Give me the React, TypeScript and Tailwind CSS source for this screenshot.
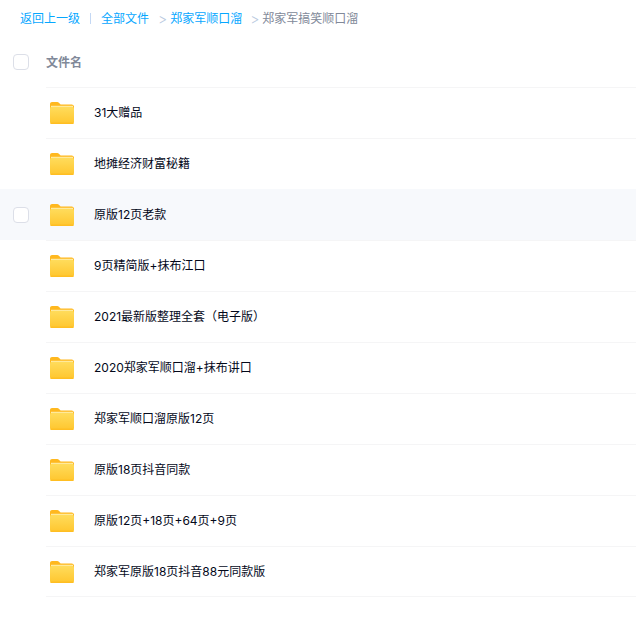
// 文件列表 页面
const files = [
  "31大赠品",
  "地摊经济财富秘籍",
  "原版12页老款",
  "9页精简版+抹布江口",
  "2021最新版整理全套（电子版）",
  "2020郑家军顺口溜+抹布讲口",
  "郑家军顺口溜原版12页",
  "原版18页抖音同款",
  "原版12页+18页+64页+9页",
  "郑家军原版18页抖音88元同款版",
];

const font = "font-['Inter','Noto_Sans_CJK_SC',sans-serif]";

const FolderIcon = () => (
  <svg width="24" height="22" viewBox="0 0 24 22" className="shrink-0">
    <defs>
      <linearGradient id="folderFront" x1="0" y1="0" x2="0" y2="1">
        <stop offset="0" stopColor="#ffdc5c" />
        <stop offset="1" stopColor="#ffc62e" />
      </linearGradient>
    </defs>
    <path d="M0 2C0 .9 .9 0 2 0h5.2c.7 0 1.2.2 1.7.7L10.6 2.4h11.2C23 2.4 24 3.4 24 4.6V8H0z" fill="#ffb81f" />
    <rect x="1" y="3.8" width="22" height="1.6" fill="#ffeeb0" />
    <rect x="0" y="4.8" width="24" height="17.2" rx="2" fill="url(#folderFront)" />
    <rect x="0.4" y="20.6" width="23.2" height="1.4" rx="0.7" fill="#ffbe22" />
  </svg>
);

const Checkbox = ({ className = "" }: { className?: string }) => (
  <span className={`block w-4 h-4 rounded-[4px] border border-[#dcdfe8] bg-white ${className}`} />
);

const App = () => {
  return (
    <div className={`w-[636px] h-[626px] overflow-hidden bg-white ${font}`}>
      {/* 경로 */}
      <div className="flex items-center h-[37px] pl-5 text-[12px] text-[#06a7ff]">
        <span>返回上一级</span>
        <span className="mx-[10px] w-px h-[11px] bg-[#c4d8f4]" />
        <span>全部文件</span>
        <span className="ml-[9px] mr-[3px] text-[14px] font-light leading-none text-[#b8c9e0]">&gt;</span>
        <span>郑家军顺口溜</span>
        <span className="ml-2 mr-[3px] text-[14px] font-light leading-none text-[#b8c9e0]">&gt;</span>
        <span className="text-[#818999]">郑家军搞笑顺口溜</span>
      </div>

      {/* 表头 */}
      <div className="flex items-center h-[50px]">
        <Checkbox className="ml-[13px]" />
        <div className="ml-[17px] pt-px text-[12px] font-bold text-[#818999]">文件名</div>
      </div>

      {/* 파일 목록 */}
      <div>
        {files.map((name, idx) => (
          <div key={idx} className={`flex items-center h-[51px] ${idx === 2 ? "bg-[#f7f9fc]" : ""}`}>
            <div className="w-[46px] shrink-0 pl-[13px]">
              {idx === 2 && <Checkbox />}
            </div>
            <div
              className={`flex-1 flex items-center h-full pl-1 border-t ${idx === 2 ? "border-transparent" : "border-[#f5f5f6]"} ${idx === files.length - 1 ? "border-b" : ""}`}
            >
              <FolderIcon />
              <span className="ml-[20px] text-[12px] text-[#03081a]">{name}</span>
            </div>
          </div>
        ))}
      </div>
    </div>
  );
};

export default App;
